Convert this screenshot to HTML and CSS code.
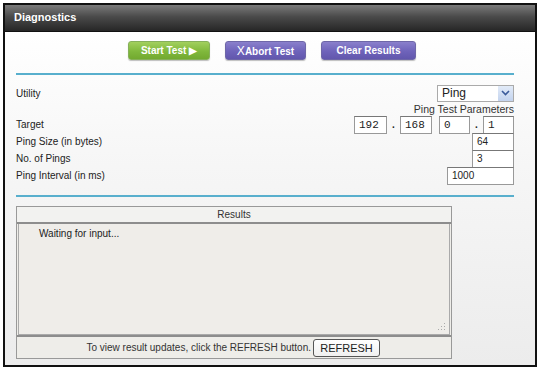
FILE: index.html
```html
<!DOCTYPE html>
<html lang="en">
<head>
    <meta charset="UTF-8">
    <title>Diagnostics</title>
    <link rel="stylesheet" href="styles.css">
</head>
<body>
    <div class="frame">
        <div class="title-bar">Diagnostics</div>
        <div class="content">
            <div class="button-row">
                <button class="btn btn-green">Start Test &#9654;</button>
                <button class="btn btn-purple"><span class="x">X</span>Abort Test</button>
                <button class="btn btn-purple btn-wide">Clear Results</button>
            </div>
            <div class="rule"></div>

            <div class="form">
                <div class="row row-utility">
                    <span class="label">Utility</span>
                    <div class="select">
                        <span>Ping</span>
                        <span class="select-arrow">
                            <svg width="9" height="6" viewBox="0 0 9 6"><path d="M1 1 L4.5 4.5 L8 1" fill="none" stroke="#3a5a9a" stroke-width="1.6"/></svg>
                        </span>
                    </div>
                </div>
                <div class="params-title">Ping Test Parameters</div>
                <div class="row">
                    <span class="label">Target</span>
                    <div class="ip">
                        <span class="field ip-a">192</span>
                        <span class="dot">.</span>
                        <span class="field ip-b">168</span>
                        <span class="field ip-c">0</span>
                        <span class="dot">.</span>
                        <span class="field ip-d">1</span>
                    </div>
                </div>
                <div class="row">
                    <span class="label">Ping Size (in bytes)</span>
                    <span class="field w42">64</span>
                </div>
                <div class="row">
                    <span class="label">No. of Pings</span>
                    <span class="field w42">3</span>
                </div>
                <div class="row">
                    <span class="label">Ping Interval (in ms)</span>
                    <span class="field w67">1000</span>
                </div>
            </div>
            <div class="rule rule-lower"></div>

            <div class="results">
                <div class="results-head">Results</div>
                <div class="results-body">
                    <span>Waiting for input...</span>
                    <svg class="grip" width="8" height="8" viewBox="0 0 8 8">
                        <rect x="6" y="0" width="1" height="1" fill="#aaa"/>
                        <rect x="3" y="3" width="1" height="1" fill="#aaa"/>
                        <rect x="6" y="3" width="1" height="1" fill="#aaa"/>
                        <rect x="0" y="6" width="1" height="1" fill="#aaa"/>
                        <rect x="3" y="6" width="1" height="1" fill="#aaa"/>
                        <rect x="6" y="6" width="1" height="1" fill="#aaa"/>
                    </svg>
                </div>
                <div class="results-foot">
                    <span>To view result updates, click the REFRESH button.</span>
                    <button class="refresh">REFRESH</button>
                </div>
            </div>
        </div>
    </div>
</body>
</html>
```

FILE: styles.css
```css
/* Diagnostics page */
body {
    margin: 0;
    padding: 3px;
    background-color: #fff;
    font-family: "Liberation Sans", Arial, sans-serif;
    font-size: 10px;
    color: #222;
}
.frame {
    width: 530px;
    height: 360px;
    border: 2px solid #111;
    display: flex;
    flex-direction: column;
}
.title-bar {
    height: 26px;
    line-height: 25px;
    padding-left: 9px;
    background: linear-gradient(to bottom, #7a7a7a 0%, #4a4a4a 45%, #262626 100%);
    color: #fff;
    font-weight: bold;
    font-size: 11px;
    border-bottom: 1px solid #111;
}
.content {
    flex: 1;
    background: linear-gradient(to bottom, #fff 0%, #f6f6f6 40%, #ececec 100%);
    padding: 9px 21px 0 11px;
}
.button-row {
    display: flex;
    justify-content: center;
    gap: 15px;
    padding-left: 14px;
}
.btn {
    height: 19px;
    border: 1px solid #8a8a8a;
    border-radius: 3px;
    color: #fff;
    font-family: inherit;
    font-size: 10px;
    font-weight: bold;
    padding: 0;
    box-shadow: 0 1px 1px rgba(0, 0, 0, 0.25);
}
.btn-green {
    width: 82px;
    background: linear-gradient(to bottom, #a2d05e 0%, #80b83c 55%, #72a930 100%);
    border-color: #86b05a;
}
.btn-purple {
    width: 81px;
    background: linear-gradient(to bottom, #8a80cc 0%, #6e63ba 55%, #6257ad 100%);
    border-color: #6e67a8;
}
.btn-wide {
    width: 95px;
}
.btn .x {
    font-size: 12px;
    font-weight: normal;
    margin-right: 0;
}
.rule {
    height: 2px;
    background-color: #58afcd;
    margin-top: 13px;
}
.rule-lower {
    margin-top: 11px;
}
.form {
    padding-top: 9px;
}
.row {
    display: flex;
    align-items: center;
    justify-content: space-between;
    height: 17px;
}
.row-utility {
    height: 18px;
}
.label {
    color: #222;
}
.select {
    width: 77px;
    height: 17px;
    border: 1px solid #aaa;
    background-color: #fff;
    display: flex;
    align-items: center;
    justify-content: space-between;
    padding-left: 4px;
    box-sizing: border-box;
    font-size: 12px;
}
.select-arrow {
    width: 15px;
    height: 15px;
    background: linear-gradient(to bottom, #e2ebf8, #c3d3ee);
    display: flex;
    align-items: center;
    justify-content: center;
}
.params-title {
    text-align: right;
    color: #333;
    font-size: 10.5px;
    height: 13px;
    line-height: 13px;
    margin-top: 1px;
}
.ip {
    display: flex;
    align-items: center;
}
.field {
    height: 18px;
    border: 1px solid #999;
    border-top-color: #777;
    background-color: #fff;
    box-sizing: border-box;
    padding-left: 4px;
    line-height: 16px;
    font-size: 10px;
    color: #222;
}
.ip .field {
    font-family: "Liberation Mono", monospace;
    font-size: 11px;
}
.ip-a { width: 33px; }
.ip-b { width: 32px; }
.ip-c { width: 31px; margin-left: 7px; }
.ip-d { width: 31px; }
.w42 { width: 42px; }
.w67 { width: 67px; }
.dot {
    width: 13px;
    text-align: center;
    font-weight: bold;
}
.results {
    margin: 9px 62px 0 0;
    border: 1px solid #999;
    background-color: #eeede9;
}
.results-head {
    height: 15px;
    line-height: 15px;
    text-align: center;
    background-color: #f2f2f0;
    border-bottom: 2px solid #8d8d8d;
    color: #333;
}
.results-body {
    position: relative;
    height: 106px;
    border: 1px solid #aaa;
    border-top: none;
    margin: 0 1px;
    padding: 4px 0 0 20px;
    background-color: #efede9;
}
.grip {
    position: absolute;
    right: 3px;
    bottom: 3px;
}
.results-foot {
    height: 21px;
    border-top: 2px solid #8d8d8d;
    display: flex;
    align-items: center;
    justify-content: flex-end;
    padding-right: 71px;
    gap: 2px;
    color: #333;
}
.refresh {
    height: 18px;
    width: 67px;
    padding: 0;
    border: 1px solid #555;
    border-radius: 3px;
    background: linear-gradient(to bottom, #fff, #f0f0f0);
    font-family: inherit;
    font-size: 11px;
    color: #222;
}
```
